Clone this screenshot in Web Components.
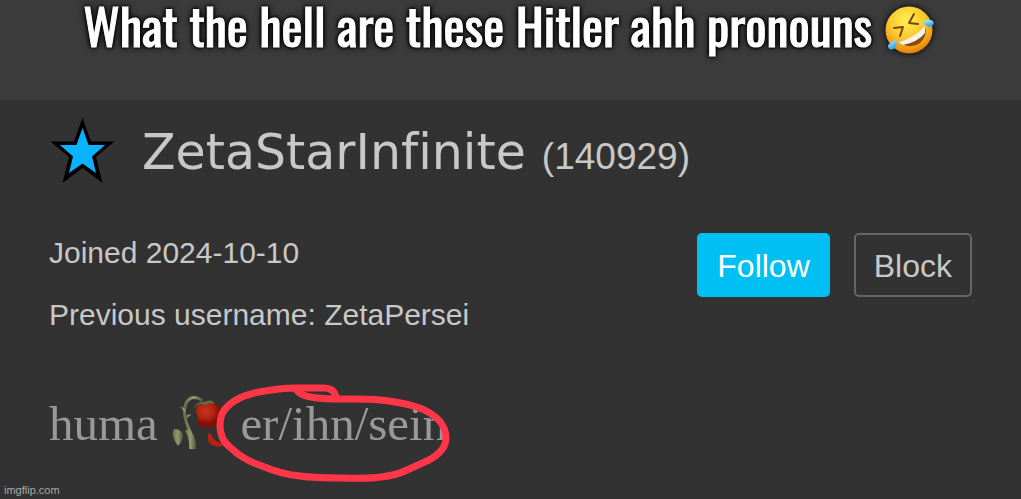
<!DOCTYPE html>
<html lang="en">
<head>
<meta charset="utf-8">
<meta name="viewport" content="width=device-width, initial-scale=1">
<title>ZetaStarInfinite</title>
<style>
body { margin: 0; background: #323232; color: #c8c8c8; font-family: "Liberation Sans", Arial, sans-serif; }
</style>
</head>
<body>
<meme-page>
  <meme-caption slot="caption">What the hell are these Hitler ahh pronouns <laugh-emoji></laugh-emoji></meme-caption>
  <user-title><star-icon slot="icon"></star-icon>ZetaStarInfinite<span slot="points">(140929)</span></user-title>
  <user-details>
    <span slot="joined">Joined 2024-10-10</span>
    <span slot="previous">Previous username: ZetaPersei</span>
    <action-button slot="actions" primary>Follow</action-button>
    <action-button slot="actions">Block</action-button>
  </user-details>
  <user-bio>huma <wilted-rose></wilted-rose> <circled-text>er/ihn/sein</circled-text></user-bio>
  <site-mark slot="mark">imgflip.com</site-mark>
</meme-page>
<script>
const define = (name, html) => customElements.define(name, class extends HTMLElement {
  constructor() {
    super();
    this.attachShadow({ mode: 'open' }).innerHTML = html;
  }
});

define('meme-page', `
<style>
:host { display: flex; flex-direction: column; min-height: 100vh; }
main { flex: 1; padding: 16px 49px 0; }
</style>
<slot name="caption"></slot>
<main><slot></slot></main>
<slot name="mark"></slot>`);

define('meme-caption', `
<style>
:host { display: block; min-height: 100px; background: #3b3b3b; }
h1 { margin: 0; padding-right: 4px; text-align: center; color: #fff; font: 400 50px/48px "Oswald", "Liberation Sans Narrow", "Roboto Condensed", sans-serif;
  -webkit-text-stroke: 1px #fff; text-shadow: 0 0 3px #000, 0 0 3px #000, 0 0 5px #000, 0 0 7px #000; }
</style>
<h1><slot></slot></h1>`);

define('laugh-emoji', `
<style>
:host { display: inline-block; width: 50px; height: 48px; vertical-align: -7px; filter: drop-shadow(0 0 3px #000); }
svg { display: block; }
</style>
<svg width="50" height="48" viewBox="0 1 50 48" role="img" aria-label="Rolling on the floor laughing">
<defs>
<radialGradient id="face" cx=".45" cy=".3" r=".72"><stop offset="0" stop-color="#fff05a"/><stop offset=".5" stop-color="#fdc92d"/><stop offset=".85" stop-color="#f09714"/><stop offset="1" stop-color="#d87308"/></radialGradient>
<linearGradient id="tear" x2=".4" y2="1"><stop stop-color="#bdf2ff"/><stop offset="1" stop-color="#2fa4e4"/></linearGradient>
</defs>
<circle cx="25" cy="25" r="23.500" fill="url(#face)"/>
<path d="M30 9 25 18l9 1M10 23l9-1-3 9" fill="none" stroke="#764606" stroke-width="2" stroke-linejoin="round" stroke-linecap="round"/>
<path d="M14 37Q31 35 41 22Q44 30 36 38Q27 45 14 37Z" fill="#8a4c08"/>
<path d="M14 37Q31 33 41 21L41 28Q34 37 19 40Z" fill="#f5f1ed"/>
<path d="M38 17Q44 13 49 16Q51 21 45 22Q41 20 38 17Z" fill="url(#tear)"/>
<path d="M12 34Q14 41 10 44Q4 46 4 40Q7 37 12 34Z" fill="url(#tear)"/>
</svg>`);

define('star-icon', `
<style>:host { display: block; } svg { display: block; }</style>
<svg width="66" height="68" viewBox="0 0 66 68" role="img" aria-label="Star">
<path d="M33.500 1.500 42 25.500H65.500L47 41 53.500 67 33.500 52 13.500 67 20 41 1.500 25.500H25Z" fill="#000"/>
<path d="M33.500 12 39.500 29H56L43 40.500 47 57 33.500 47.500 20 57 24 40.500 11 29H27.500Z" fill="#0ab3ff"/>
</svg>`);

define('user-title', `
<style>
:host { display: flex; align-items: center; gap: 27px; }
h2 { margin: 0; padding-top: 6px; font: 400 49px/62px "DejaVu Sans", Verdana, sans-serif; font-variant-ligatures: none; white-space: nowrap; }
small { font: 37px "Liberation Sans", Arial, sans-serif; margin-left: 16px; }
</style>
<slot name="icon"></slot>
<h2><slot></slot><small><slot name="points"></slot></small></h2>`);

define('user-details', `
<style>
:host { display: flex; justify-content: space-between; align-items: flex-start; padding-top: 49px; }
.facts { font-size: 30px; line-height: 40px; }
p { margin: 0 0 22px; }
.actions { display: flex; gap: 24px; }
</style>
<div class="facts"><p><slot name="joined"></slot></p><p><slot name="previous"></slot></p></div>
<div class="actions"><slot name="actions"></slot></div>`);

define('action-button', `
<style>
:host { display: block; }
button { height: 64px; padding: 2px 18px 0; border: 2px solid #666; border-radius: 5px; background: none; color: #c8c8c8; font: 32px "Liberation Sans", Arial, sans-serif; cursor: pointer; }
:host([primary]) button { background: #00bff3; border-color: #00bff3; color: #fff; }
</style>
<button type="button"><slot></slot></button>`);

define('user-bio', `
<style>
:host { display: block; padding-top: 35px; color: #999; font: 49px/64px "Liberation Serif", "Times New Roman", serif; white-space: nowrap; }
</style>
<slot></slot>`);

define('wilted-rose', `
<style>:host { display: inline-block; width: 58px; height: 56px; vertical-align: -10px; } svg { display: block; }</style>
<svg width="58" height="56" viewBox="0 0 58 56" role="img" aria-label="Wilted rose">
<defs>
<linearGradient id="stem"><stop stop-color="#66704a"/><stop offset=".5" stop-color="#929a70"/><stop offset="1" stop-color="#4b5535"/></linearGradient>
<radialGradient id="rose" cx=".35" cy=".35"><stop stop-color="#c9341a"/><stop offset=".6" stop-color="#b3220f"/><stop offset="1" stop-color="#7d1008"/></radialGradient>
</defs>
<path d="M22 54Q23 43 18 33Q12 18 16 9Q22-1 33 7" fill="none" stroke="url(#stem)" stroke-width="3"/>
<path d="M19 55Q20 46 15 36L20 36Q27 44 26 55Z" fill="url(#stem)"/>
<path d="m15 19-5-7 5 3M17 21l5-1-5 4" fill="#89936a"/>
<path d="M8 52Q0 41 4 35Q13 35 13 43Q12 48 8 52Z" fill="url(#stem)"/>
<path d="M30 10Q38 6 47 11Q54 12 54 24Q51 34 43 33Q34 36 27 30Q29 22 26 18Q25 13 30 10Z" fill="url(#rose)"/>
<path d="M31 26Q36 31 43 28Q49 30 53 22" fill="none" stroke="#8b1209"/>
<path d="M23 15Q26 7 34 8Q42 4 45 10L39 9 36 11 31 10Q27 10 23 15Z" fill="#626c44"/>
<path d="M40 38Q43 48 52 49L53 52Q45 54 39 49Q36 43 40 38Z" fill="#b82010"/>
</svg>`);

define('circled-text', `
<style>
:host { display: inline-block; position: relative; }
svg { position: absolute; left: -26px; top: -12px; overflow: visible; pointer-events: none; }
</style>
<slot></slot>
<svg width="240" height="100" viewBox="0 0 240 100" aria-hidden="true">
<path d="M122 16C120 10 115 8 110 8L82 8C67 8 56 10 45 12C30 15 20 20 14 26C7 32 6 39 6 45C6 55 10 63 17 68C25 76 36 82 48 86C60 91 73 95 86 96C100 98 114 98 128 98C142 98 155 99 167 97C176 96 185 94 193 90L213 81C225 75 232 68 232 58C232 45 222 35 208 29C196 24 186 23 175 21C158 18 143 19 128 19C110 19 86 18 83 10" fill="none" stroke="#ff3548" stroke-width="7" stroke-linecap="round" stroke-linejoin="round"/>
</svg>`);

define('site-mark', `
<style>:host { display: block; padding: 0 4px 2px; color: #aaa; font-size: 11px; line-height: 13px; }</style>
<slot></slot>`);
</script>
</body>
</html>
